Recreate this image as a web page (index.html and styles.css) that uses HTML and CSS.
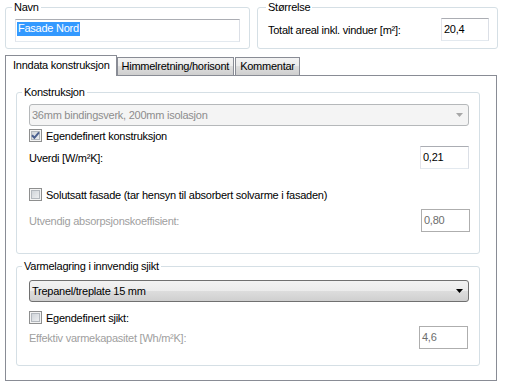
FILE: index.html
```html
<!DOCTYPE html>
<html lang="no">
<head>
    <meta charset="UTF-8">
    <title>Fasade</title>
    <link rel="stylesheet" href="styles.css">
</head>
<body>
    <div class="top">
        <fieldset class="group name-group">
            <legend>Navn</legend>
            <div class="textbox"><span class="selected">Fasade Nord</span></div>
        </fieldset>
        <fieldset class="group size-group">
            <legend>Størrelse</legend>
            <div class="row">
                <span>Totalt areal inkl. vinduer [m²]:</span>
                <div class="textbox num size-num">20,4</div>
            </div>
        </fieldset>
    </div>

    <div class="tabs">
        <div class="tab active">Inndata konstruksjon</div>
        <div class="tab">Himmelretning/horisont</div>
        <div class="tab">Kommentar</div>
    </div>

    <div class="panel">
        <!-- Konstruksjon -->
        <fieldset class="group konstr-group">
            <legend>Konstruksjon</legend>
            <div class="combo disabled">
                <span>36mm bindingsverk, 200mm isolasjon</span>
                <svg width="7" height="4" viewBox="0 0 7 4"><path d="M0 0h7L3.5 4z" fill="#a7a7a7"/></svg>
            </div>
            <div class="check-row first-check">
                <span class="checkbox">
                    <svg width="13" height="13" viewBox="0 0 13 13"><path d="M3 6.2l2.4 2.6L10 3.4" fill="none" stroke="#4a5f8f" stroke-width="2"/></svg>
                </span>
                Egendefinert konstruksjon
            </div>
            <div class="row uverdi-row">
                <span>Uverdi [W/m²K]:</span>
                <div class="textbox num">0,21</div>
            </div>
            <div class="check-row sol-check">
                <span class="checkbox"></span>
                Solutsatt fasade (tar hensyn til absorbert solvarme i fasaden)
            </div>
            <div class="row abs-row">
                <span class="dim">Utvendig absorpsjonskoeffisient:</span>
                <div class="textbox num off shift">0,80</div>
            </div>
        </fieldset>

        <!-- Varmelagring -->
        <fieldset class="group varme-group">
            <legend>Varmelagring i innvendig sjikt</legend>
            <div class="combo">
                <span>Trepanel/treplate 15 mm</span>
                <svg width="7" height="4" viewBox="0 0 7 4"><path d="M0 0h7L3.5 4z" fill="#000"/></svg>
            </div>
            <div class="check-row sjikt-check">
                <span class="checkbox"></span>
                Egendefinert sjikt:
            </div>
            <div class="row kap-row">
                <span class="dim">Effektiv varmekapasitet [Wh/m²K]:</span>
                <div class="textbox num off back">4,6</div>
            </div>
        </fieldset>
    </div>
</body>
</html>
```

FILE: styles.css
```css
* {
    box-sizing: border-box;
}

body {
    margin: 0;
    padding: 1px 9px 0 5px;
    background: #fff;
    font-family: "Liberation Sans", Arial, sans-serif;
    font-size: 11px;
    letter-spacing: -0.25px;
    color: #000;
}

.top {
    display: grid;
    grid-template-columns: 245px 241px;
    column-gap: 7px;
}

.group {
    margin: 0;
    min-width: 0;
    border: 1px solid #d5dfe5;
    border-radius: 3px;
}

.group legend {
    line-height: 13px;
    padding: 0 2px;
}

.name-group {
    padding: 5px 9px 6px 9px;
}

.name-group legend {
    margin-left: -3px;
}

.size-group {
    padding: 4px 8px 7px 10px;
}

.size-group legend {
    margin-left: -2px;
}

.row {
    display: flex;
    justify-content: space-between;
    align-items: center;
}

.textbox {
    height: 23px;
    border: 1px solid;
    border-color: #abadb3 #dbdfe6 #e3e9ef #e2e3ea;
    background: #fff;
    padding: 2px 1px 0;
    line-height: 13px;
    white-space: nowrap;
}

.textbox.num {
    width: 49px;
    padding: 3px 2px 0;
    line-height: 14px;
}

.textbox.size-num {
    width: 48px;
}

.textbox.off {
    border-color: #aeaeae;
    color: #6d6d6d;
}

.textbox.shift {
    margin-right: -1px;
}

.textbox.back {
    margin-right: 1px;
}

.selected {
    display: inline-block;
    background: #3399ff;
    color: #fff;
    height: 14px;
    padding: 0 1px;
}

/* tabs */
.tabs {
    display: flex;
    align-items: flex-end;
    height: 20px;
    margin-top: 6px;
}

.tab {
    height: 18px;
    line-height: 17px;
    padding: 0 4px;
    border: 1px solid #898c95;
    border-bottom: none;
    background: linear-gradient(#f3f3f3, #ebebeb 50%, #dddddd 50%, #cfcfcf);
    white-space: nowrap;
}

.tab + .tab {
    margin-left: 1px;
}

.tab.active {
    position: relative;
    height: 21px;
    line-height: 19px;
    margin-bottom: -1px;
    padding: 0 6px 0 7px;
    background: #fff;
}

.tab.active + .tab {
    margin-left: 0;
}

.panel {
    width: 492px;
    height: 306px;
    border: 1px solid #898c95;
    padding: 10px 16px 0 10px;
}

.konstr-group {
    padding: 5px 10px 21px 12px;
}

.konstr-group legend,
.varme-group legend {
    margin-left: -7px;
}

.varme-group {
    margin-top: 6px;
    padding: 7px 10px 16px 12px;
}

.combo {
    display: flex;
    justify-content: space-between;
    align-items: center;
    height: 22px;
    padding: 0 5px 0 2px;
    border: 1px solid #707070;
    border-radius: 3px;
    background: linear-gradient(#f2f2f2, #ebebeb 50%, #dddddd 50%, #cfcfcf);
}

.combo.disabled {
    border-color: #b5b8ba;
    background: #f4f4f4;
    color: #8d8d8d;
}

.check-row {
    display: flex;
    align-items: center;
    height: 13px;
    gap: 4px;
}

.first-check {
    margin-top: 3px;
}

.uverdi-row {
    margin-top: 4px;
}

.sol-check {
    margin-top: 19px;
}

.abs-row {
    margin-top: 8px;
}

.sjikt-check {
    margin-top: 9px;
}

.kap-row {
    margin-top: 2px;
}

.checkbox {
    display: block;
    width: 13px;
    height: 13px;
    border: 1px solid #8e8f8f;
    background: linear-gradient(135deg, #c9ced4, #f4f5f6);
    box-shadow: inset 0 0 0 1px #f4f4f4, inset 0 0 0 2px #b3b8be;
}

.checkbox svg {
    display: block;
    margin: -1px;
}

.dim {
    color: #a0a0a0;
}
```
